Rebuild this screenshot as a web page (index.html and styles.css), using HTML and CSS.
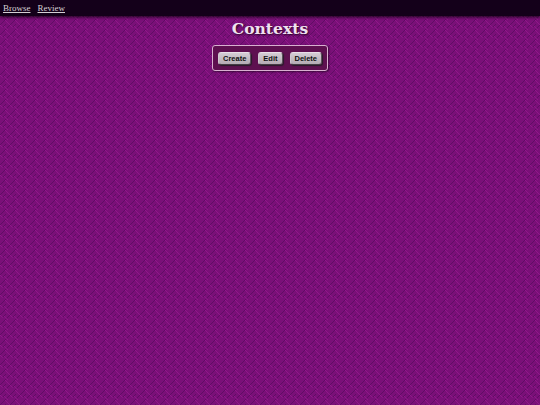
FILE: index.html
```html
<!DOCTYPE html>
<html>
<head>
  <meta charset="UTF-8">
  <title>Contexts</title>
  <link rel="stylesheet" href="styles.css">
</head>
<body>
  <div class="nav">
    <a href="#">Browse</a>
    <a href="#">Review</a>
  </div>
  <div class="content">
    <h1>Contexts</h1>
    <div class="toolbar">
      <button>Create</button>
      <button>Edit</button>
      <button>Delete</button>
    </div>
  </div>
</body>
</html>
```

FILE: styles.css
```css
* {
  box-sizing: border-box;
}

html, body {
  height: 100%;
}

body {
  margin: 0;
  overflow: hidden;
  font-family: "Liberation Serif", serif;
  background-color: #7a1078;
  /* woven tile: short diagonal dashes that change direction */
  background-image: url("data:image/svg+xml,%3Csvg xmlns='http://www.w3.org/2000/svg' width='10' height='10'%3E%3Cpath d='M0 5L5 0M2 8L6 4M5 10L10 5' stroke='%23520a5a' stroke-opacity='.65' fill='none'/%3E%3Cpath d='M5 0L10 5M4 6L8 10M0 5L3 8' stroke='%23a01c98' stroke-opacity='.6' fill='none'/%3E%3C/svg%3E");
  background-size: 10px 10px;
}

.nav {
  height: 16px;
  padding-left: 3px;
  display: flex;
  gap: 7px;
  align-items: center;
  background: #14001a;
  box-shadow: 0 1px 3px rgba(0, 0, 0, 0.8);
  font-size: 9px;
}

.nav a {
  color: #d4d0d4;
}

.content {
  display: flex;
  flex-direction: column;
  align-items: center;
}

h1 {
  margin: 2px 0 6px;
  font-family: "DejaVu Serif", serif;
  font-size: 15.6px;
  line-height: 21px;
  color: #f0e2f0;
  text-shadow: 1px 1px 2px rgba(0, 0, 0, 0.7);
}

.toolbar {
  display: flex;
  gap: 7px;
  width: 116px;
  height: 26px;
  padding: 6px;
  justify-content: center;
  background: #5e1050;
  border: 1px solid #d8b0d0;
  border-radius: 3px;
  box-shadow: 1px 1px 2px rgba(0, 0, 0, 0.5);
}

button {
  height: 13px;
  padding: 0 4px;
  font-family: "Liberation Sans", sans-serif;
  font-size: 7.5px;
  font-weight: bold;
  color: #111;
  background: linear-gradient(#d4ccd4, #b4acb4);
  border: 1px solid;
  border-color: #e8e0e8 #5a505a #443c44 #d0c8d0;
  border-radius: 3px;
  box-shadow: 1px 1px 1px #2a1a2a;
}
```
